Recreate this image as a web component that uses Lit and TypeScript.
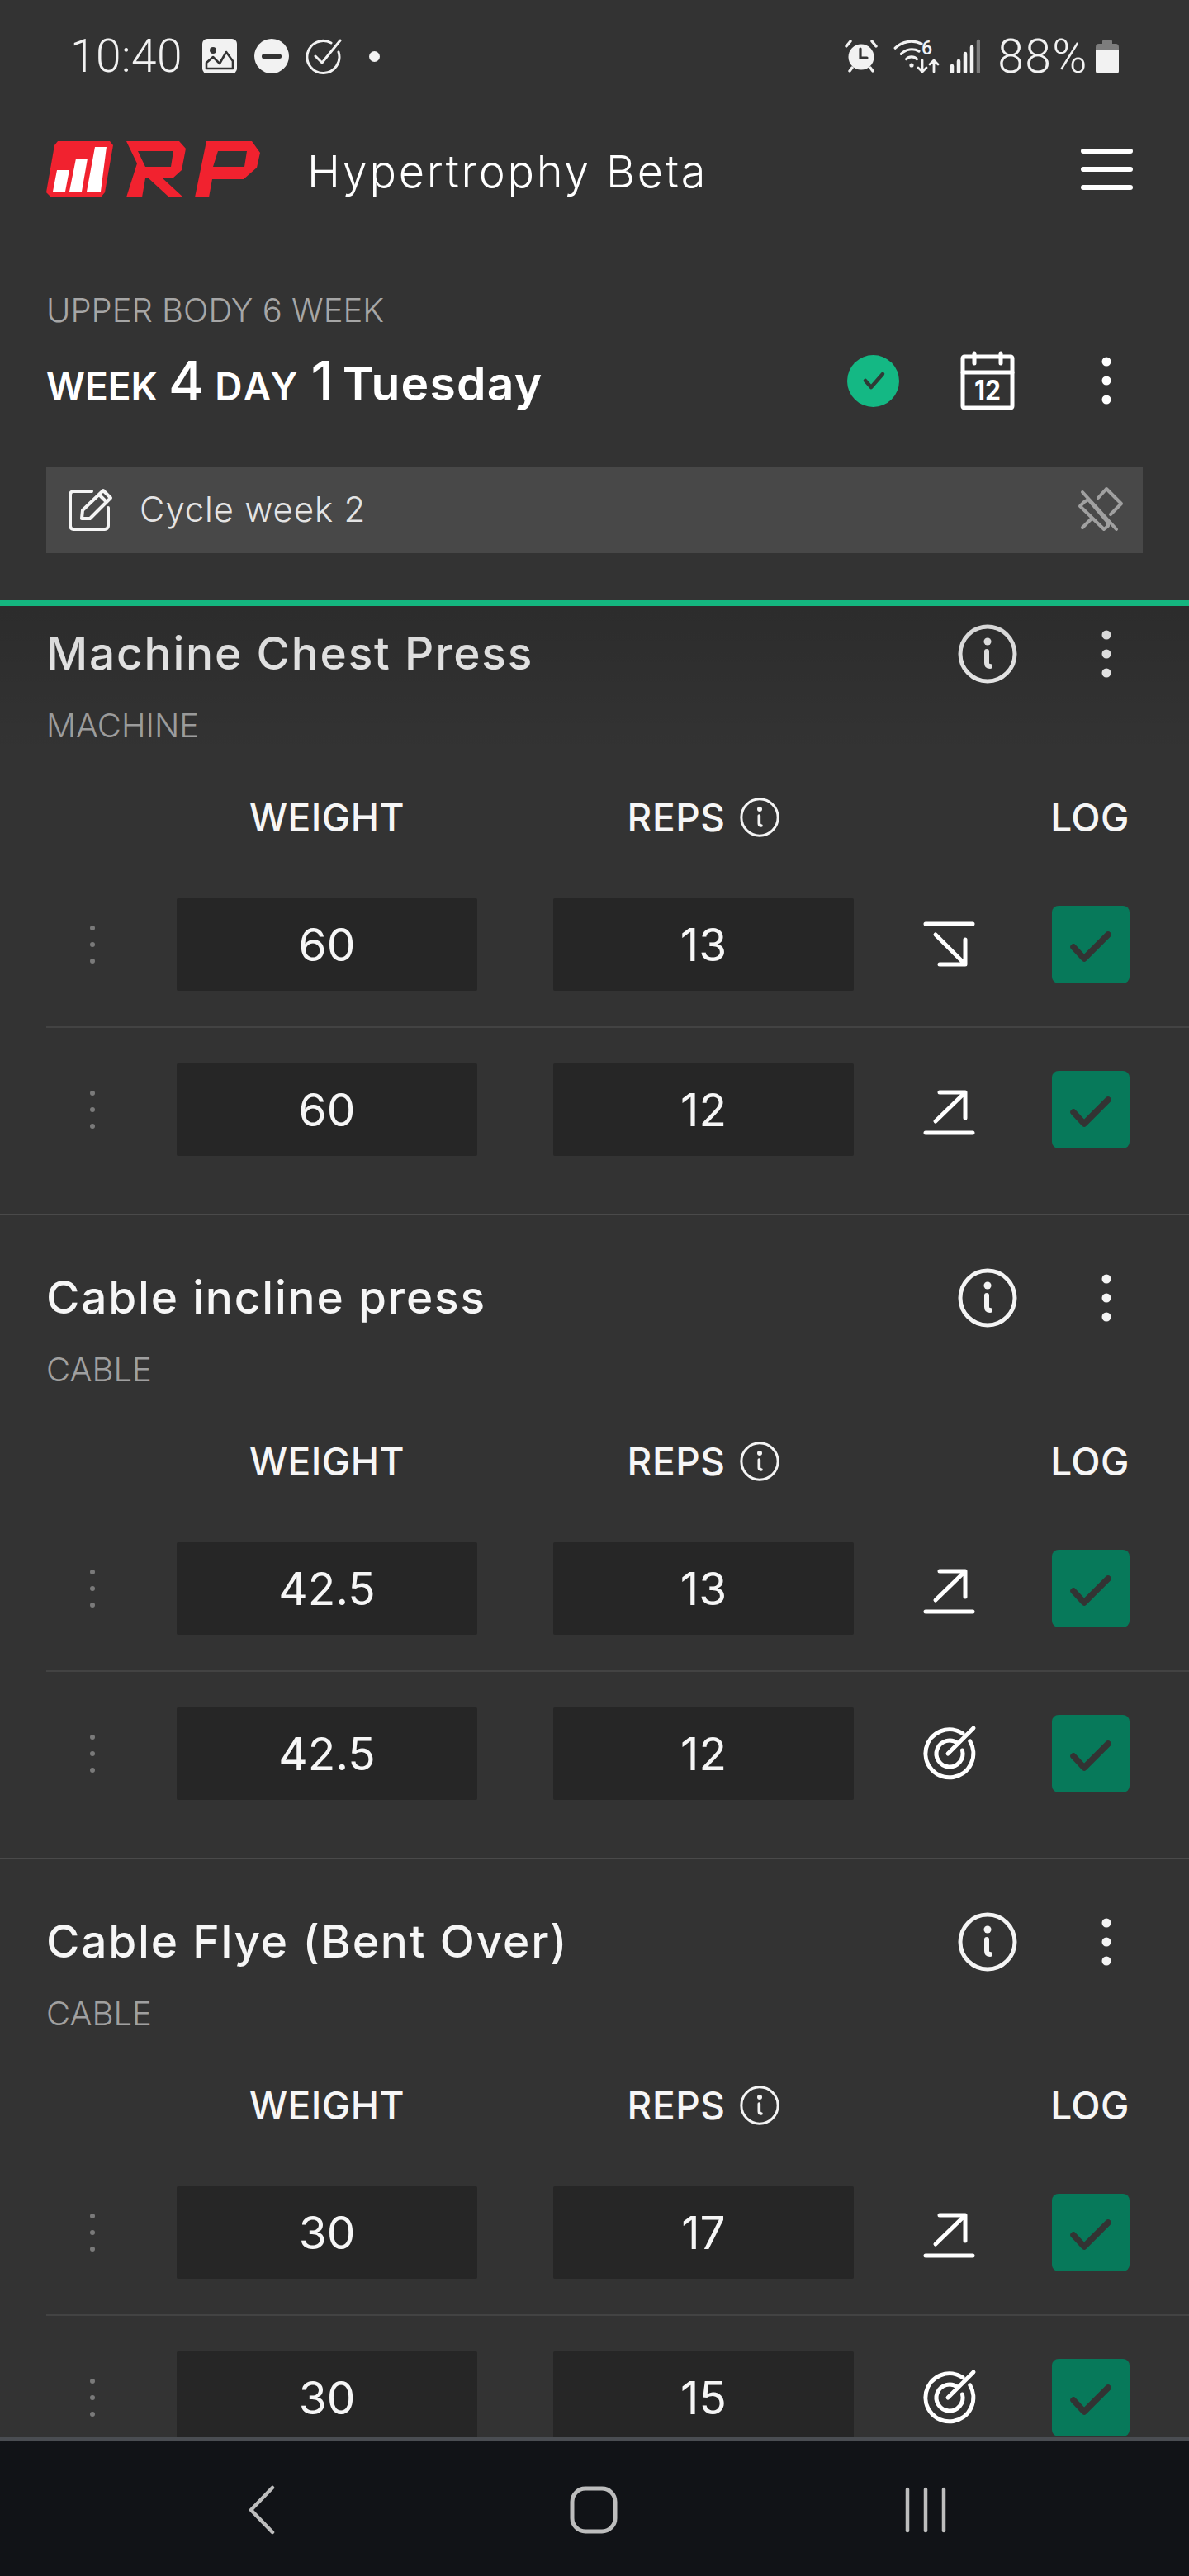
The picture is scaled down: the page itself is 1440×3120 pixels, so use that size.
import { LitElement, html, css } from 'lit';
import { customElement, property } from 'lit/decorators.js';

type Trend = 'down' | 'up' | 'target';
interface SetRow { weight: string; reps: string; trend: Trend; }
interface Exercise { name: string; kind: string; sets: SetRow[]; }

const EXERCISES: Exercise[] = [
  {
    name: 'Machine Chest Press',
    kind: 'MACHINE',
    sets: [
      { weight: '60', reps: '13', trend: 'down' },
      { weight: '60', reps: '12', trend: 'up' },
    ],
  },
  {
    name: 'Cable incline press',
    kind: 'CABLE',
    sets: [
      { weight: '42.5', reps: '13', trend: 'up' },
      { weight: '42.5', reps: '12', trend: 'target' },
    ],
  },
  {
    name: 'Cable Flye (Bent Over)',
    kind: 'CABLE',
    sets: [
      { weight: '30', reps: '17', trend: 'up' },
      { weight: '30', reps: '15', trend: 'target' },
    ],
  },
];

const dots = (color = '#fff') => html`
  <svg width="24" height="70" viewBox="0 0 24 70" fill=${color}>
    <ellipse cx="12" cy="12" rx="5.5" ry="5.5" />
    <ellipse cx="12" cy="35" rx="5.5" ry="5.5" />
    <ellipse cx="12" cy="58" rx="5.5" ry="5.5" />
  </svg>
`;

const infoIcon = (size: number, stroke: number) => html`
  <svg width=${size} height=${size} viewBox="0 0 72 72" fill="none" stroke="#f4f4f4" stroke-width=${stroke} stroke-linecap="round">
    <circle cx="36" cy="36" r=${36 - stroke / 2 - 0.5} />
    <path d="M35 33 V47 Q35 51 39 51" stroke-width=${stroke + 1} />
    <circle cx="36" cy="21" r="4.5" fill="#f4f4f4" stroke="none" />
  </svg>
`;

const trendIcon = (trend: Trend) => {
  if (trend === 'down') {
    return html`<svg width="72" height="72" viewBox="0 0 72 72" fill="none" stroke="#fff" stroke-width="5" stroke-linecap="round" stroke-linejoin="round">
      <path d="M7 11 H64 M19 24 L54 59 M24 60 H55 V30" />
    </svg>`;
  }
  if (trend === 'up') {
    return html`<svg width="72" height="72" viewBox="0 0 72 72" fill="none" stroke="#fff" stroke-width="5" stroke-linecap="round" stroke-linejoin="round">
      <path d="M7 64 H64 M19 50 L54 16 M24 15 H55 V46" />
    </svg>`;
  }
  return html`<svg width="72" height="72" viewBox="0 0 72 72" fill="none" stroke="#fff" stroke-width="5" stroke-linecap="round">
    <path d="M52 11.7 A29 29 0 1 0 60.8 21" />
    <path d="M46 23.5 A16 16 0 1 0 51.5 32" />
    <path d="M34 36 L65 5" />
  </svg>`;
};

@customElement('exercise-card')
export class ExerciseCard extends LitElement {
  static styles = css`
    :host {
      display: block;
      font-family: Inter, 'Noto Sans', sans-serif;
      border-bottom: 2px solid #4a4a4a;
      padding-bottom: 70px;
    }
    svg { display: block; flex: none; }
    .title-row {
      display: flex;
      align-items: center;
      height: 70px;
      padding: 65px 88px 0 56px;
    }
    .title {
      flex: 1;
      margin-top: -2px;
      font-size: 55px;
      font-weight: 500;
      letter-spacing: 1.8px;
      color: #f6f6f6;
      line-height: 70px;
    }
    .info-btn { margin-right: 96px; }
    .kind {
      margin: 27px 0 0 56px;
      font-size: 40px;
      font-weight: 300;
      line-height: 50px;
      color: #a0a0a0;
    }
    .grid {
      display: grid;
      grid-template-columns: 158px 364px 92px 364px 240px 94px;
      align-items: center;
    }
    .heads {
      margin: 58px 0 27px;
      padding: 0 72px 0 56px;
      height: 56px;
      font-size: 46px;
      font-weight: 500;
      letter-spacing: 0.5px;
      color: #f6f6f6;
      text-align: center;
    }
    .c-w { grid-column: 2; }
    .c-r { grid-column: 4; }
    .c-i { grid-column: 5; }
    .c-c { grid-column: 6; }
    .reps-head {
      display: flex;
      justify-content: center;
      align-items: center;
      gap: 18px;
    }
    .log-head { white-space: nowrap; justify-self: end; }
    .set {
      margin-left: 56px;
      padding: 43px 72px 43px 0;
      border-bottom: 2px solid #434343;
    }
    .set:last-of-type { border-bottom: none; padding-bottom: 0; }
    .grip { grid-column: 1; margin-left: 44px; }
    .field {
      height: 112px;
      display: flex;
      align-items: center;
      justify-content: center;
      background: #262626;
      border-radius: 2px;
      font-size: 55px;
      font-weight: 400;
      color: #f6f6f6;
    }
    .trend { margin-left: 80px; }
    .check {
      width: 94px;
      height: 94px;
      border-radius: 8px;
      background: #07795a;
    }
  `;

  @property({ attribute: false }) exercise!: Exercise;

  render() {
    const ex = this.exercise;
    return html`
      <div class="title-row">
        <div class="title">${ex.name}</div>
        <div class="info-btn">${infoIcon(72, 5)}</div>
        ${dots('#f4f4f4')}
      </div>
      <div class="kind">${ex.kind}</div>
      <div class="grid heads">
        <div class="c-w">WEIGHT</div>
        <div class="c-r reps-head"><span>REPS</span>${infoIcon(48, 4.5)}</div>
        <div class="c-c log-head">LOG</div>
      </div>
      ${ex.sets.map(
        (s) => html`
          <div class="grid set">
            <div class="grip">
              <svg width="24" height="52" viewBox="0 0 24 52" fill="#7a7a7a">
                <circle cx="12" cy="6" r="3" />
                <circle cx="12" cy="26" r="3" />
                <circle cx="12" cy="46" r="3" />
              </svg>
            </div>
            <div class="field c-w">${s.weight}</div>
            <div class="field c-r">${s.reps}</div>
            <div class="c-i trend">${trendIcon(s.trend)}</div>
            <div class="c-c check">
              <svg width="94" height="94" viewBox="0 0 94 94" fill="none" stroke="#333" stroke-width="7.5" stroke-linecap="round" stroke-linejoin="round">
                <path d="M26 50 L39 64 L68 35" />
              </svg>
            </div>
          </div>
        `
      )}
    `;
  }
}

@customElement('app-root')
export class AppRoot extends LitElement {
  static styles = css`
    :host {
      display: block;
      width: 1440px;
      height: 3120px;
      background: #333;
      font-family: Inter, 'Noto Sans', sans-serif;
      color: #fff;
      overflow: hidden;
    }
    .page {
      display: flex;
      flex-direction: column;
      height: 3120px;
    }
    svg { display: block; flex: none; }

    /* status bar */
    .status {
      height: 136px;
      flex: none;
      display: flex;
      align-items: center;
      padding: 0 85px 0 85px;
      font-family: Roboto, sans-serif;
      font-weight: 300;
      font-size: 55px;
      color: #f2f2f2;
    }
    .time { letter-spacing: 0.5px; margin-right: 24px; }
    .gap-21 { margin-right: 21px; }
    .gap-19 { margin-right: 19px; }
    .gap-33 { margin-right: 33px; }
    .status-dot { width: 13px; height: 13px; border-radius: 50%; background: #f2f2f2; }
    .status-right {
      margin-left: auto;
      display: flex;
      align-items: center;
    }
    .pct { margin: 0 9px 0 21px; font-size: 57px; letter-spacing: 1.5px; font-weight: 300; }
    .alarm { margin-right: 19px; }
    .wifi { margin-right: 10px; }

    /* app header */
    .app-header {
      height: 138px;
      flex: none;
      display: flex;
      align-items: center;
      padding: 0 68px 0 56px;
    }
    .app-name {
      flex: 1;
      margin-left: 56px;
      margin-top: 4px;
      font-size: 54px;
      font-weight: 300;
      letter-spacing: 2.7px;
    }
    .burger {
      display: flex;
      flex-direction: column;
      gap: 16px;
    }
    .burger span {
      width: 63px;
      height: 6px;
      border-radius: 3px;
      background: #fff;
    }

    /* workout summary */
    .summary { flex: none; padding: 77px 0 57px; }
    .meso {
      margin-left: 56px;
      font-size: 40px;
      font-weight: 300;
      line-height: 50px;
      color: #a6a6a6;
    }
    .week-row {
      display: flex;
      align-items: center;
      height: 70px;
      margin-top: 25px;
      padding: 0 88px 0 56px;
    }
    .week {
      flex: 1;
      display: flex;
      align-items: baseline;
      gap: 13px;
      font-weight: 600;
      color: #fff;
    }
    .w-label { font-size: 46px; }
    .w-spaced { letter-spacing: 3px; }
    .w-num { font-size: 66px; font-weight: 500; }
    .w-one { margin-right: -2px; }
    .w-day { font-size: 57px; letter-spacing: 1.2px; }
    .done {
      width: 63px;
      height: 63px;
      border-radius: 50%;
      background: #14b884;
      margin-right: 74px;
      display: flex;
      align-items: center;
      justify-content: center;
    }
    .cal { margin-right: 99px; }
    .note {
      margin: 70px 56px 0;
      height: 104px;
      display: flex;
      align-items: center;
      padding: 0 20px 0 26px;
      background: #484848;
      font-size: 42px;
      font-weight: 300;
      letter-spacing: 0.8px;
      color: #e4e4e4;
    }
    .note-text { flex: 1; margin: -3px 0 0 31px; }

    .accent { flex: none; height: 7px; background: #15b67f; }

    /* scrolled list */
    .list {
      flex: 1;
      min-height: 0;
      overflow: hidden;
      position: relative;
    }
    .list-inner { margin-top: -42px; }
    .fade {
      position: absolute;
      left: 0;
      right: 0;
      top: 0;
      height: 180px;
      background: linear-gradient(rgba(0, 0, 0, 0.14), rgba(0, 0, 0, 0));
      pointer-events: none;
    }

    /* android nav */
    .nav {
      flex: none;
      box-sizing: border-box;
      border-top: 4px solid #4a4d52;
      background: #111317;
      display: flex;
      align-items: center;
      padding: 4px 0 0 116px;
      height: 168px;
    }
    .nav-item {
      width: 402px;
      display: flex;
      justify-content: center;
    }
  `;

  render() {
    return html`
      <div class="page">
        <div class="status">
          <span class="time">10:40</span>
          <svg class="gap-21" width="42" height="42" viewBox="0 0 42 42">
            <rect width="42" height="42" rx="6" fill="#f2f2f2" />
            <circle cx="13" cy="14" r="4" fill="#333" />
            <path d="M5 36 V29 L13 22 L21 30 L29 16 L37 27 V36 Z" fill="none" stroke="#333" stroke-width="2.6" stroke-linejoin="round" />
          </svg>
          <svg class="gap-19" width="42" height="42" viewBox="0 0 42 42">
            <circle cx="21" cy="21" r="21" fill="#f2f2f2" />
            <rect x="9" y="18.5" width="24" height="5.5" rx="2.5" fill="#333" />
          </svg>
          <svg class="gap-33" width="45" height="45" viewBox="0 0 45 45" fill="none" stroke="#f2f2f2" stroke-width="3" stroke-linecap="round" stroke-linejoin="round">
            <path d="M32 6 A19.5 19.5 0 1 0 41 17" />
            <path d="M13 22 L21 30 L43 3" />
          </svg>
          <span class="status-dot"></span>
          <div class="status-right">
            <svg class="alarm" width="40" height="40" viewBox="0 0 40 40" fill="#f2f2f2" stroke="#f2f2f2" stroke-linecap="round">
              <circle cx="20" cy="21" r="15.5" stroke="none" />
              <path d="M2 8 L7 2 M38 8 L33 2 M6 38 L9 34 M34 38 L31 34" stroke-width="3.4" fill="none" />
              <path d="M19 11 V22 H27" stroke="#333" stroke-width="3.2" fill="none" />
            </svg>
            <svg class="wifi" width="58" height="44" viewBox="0 0 58 44" fill="none" stroke="#f2f2f2" stroke-width="3.2" stroke-linecap="round" stroke-linejoin="round">
              <path d="M2.2 12.2 A28 28 0 0 1 34 7" />
              <path d="M9.3 19.3 A18 18 0 0 1 31 16" />
              <path d="M15.6 25.6 A9 9 0 0 1 28.4 25.6" />
              <circle cx="22" cy="33" r="2.6" fill="#f2f2f2" stroke="none" />
              <text x="34" y="20" font-size="23" font-weight="500" font-family="Roboto, sans-serif" fill="#f2f2f2" stroke="none">6</text>
              <path d="M35 27 V41 M30 36 L35 41 L40 36 M49 41 V27 M44 32 L49 27 L54 32" stroke-width="2.8" />
            </svg>
            <svg width="37" height="42" viewBox="0 0 37 42" stroke-width="4.5" stroke-linecap="round">
              <path d="M3 40 V33 M11 40 V27 M19 40 V18 M27 40 V10" stroke="#f2f2f2" />
              <path d="M35 40 V3" stroke="#7b7b7b" />
            </svg>
            <span class="pct">88%</span>
            <svg width="28" height="42" viewBox="0 0 28 42">
              <path d="M8 6 V3 a2 2 0 0 1 2 -2 H18 a2 2 0 0 1 2 2 V6 H24 a4 4 0 0 1 4 4 V13 H0 V10 a4 4 0 0 1 4 -4 Z" fill="#7d7d7d" />
              <path d="M0 13 H28 V39 a3 3 0 0 1 -3 3 H3 a3 3 0 0 1 -3 -3 Z" fill="#f2f2f2" />
            </svg>
          </div>
        </div>

        <div class="app-header">
          <svg width="260" height="70" viewBox="56 168 260 70">
            <path d="M70 169 H133 L137 174 L127 231 L122 237 H62 L56 231 L66 174 Z" fill="#f1222f" />
            <path d="M69 204 H84 L79 230 H64 Z M92 190 H106 L99 230 H84 Z M115 176 H129 L122 230 H105 Z" fill="#fff" />
            <path fill-rule="evenodd" fill="#f1222f" d="M153 169 H217 L225 178 L220 204 L209 214 H197 L222 237 H205 L180 214 H176 L172 237 H153 L166 196 Z M167 181 L176 200 H207 L210 181 Z" />
            <path fill-rule="evenodd" fill="#f1222f" d="M250 169 H305 L315 183 L311 201 L295 215 H257 L253 237 H236 Z M264 181 L258 200 H296 L299 181 Z" />
          </svg>
          <div class="app-name">Hypertrophy Beta</div>
          <div class="burger"><span></span><span></span><span></span></div>
        </div>

        <div class="summary">
          <div class="meso">UPPER BODY 6 WEEK</div>
          <div class="week-row">
            <div class="week">
              <span class="w-label">WEEK</span>
              <span class="w-num">4</span>
              <span class="w-label w-spaced">DAY</span>
              <span class="w-num w-one">1</span>
              <span class="w-day">Tuesday</span>
            </div>
            <div class="done">
              <svg width="36" height="36" viewBox="0 0 36 36" fill="none" stroke="#2f3a36" stroke-width="4.5" stroke-linecap="round" stroke-linejoin="round">
                <path d="M8 18 L15 26 L29 10" />
              </svg>
            </div>
            <svg class="cal" width="66" height="72" viewBox="0 0 66 72" fill="none" stroke="#fff" stroke-width="5" stroke-linecap="round" stroke-linejoin="round">
              <rect x="3" y="7" width="60" height="62" rx="2" />
              <path d="M3 26 H63" />
              <path d="M17 3 V15 M49 3 V15" />
              <text x="33" y="60" text-anchor="middle" font-size="34" font-weight="700" font-family="Inter, sans-serif" fill="#fff" stroke="none" textLength="32" lengthAdjust="spacingAndGlyphs">12</text>
            </svg>
            ${dots('#fff')}
          </div>
          <div class="note">
            <svg width="56" height="56" viewBox="0 0 56 56" fill="none" stroke="#f4f4f4" stroke-width="4" stroke-linecap="round" stroke-linejoin="round">
              <path d="M29 5 H7 a4 4 0 0 0 -4 4 V47 a4 4 0 0 0 4 4 H45 a4 4 0 0 0 4 -4 V25" />
              <path d="M18 28 L43 4 L52 13 L27 38 H17 Z M38 9 L47 18" />
            </svg>
            <span class="note-text">Cycle week 2</span>
            <svg width="60" height="60" viewBox="0 0 60 60" fill="none" stroke="#a0a0a0" stroke-width="4" stroke-linecap="round" stroke-linejoin="round">
              <path d="M7 8 L48 53" />
              <path d="M9 20 L4 25 L33 53 L38 49 V45 L14 17 Z" />
              <path d="M41 35 L54 22 L36 4 L26 15" />
              <path d="M18 40 L7 51" />
            </svg>
          </div>
        </div>

        <div class="accent"></div>

        <div class="list">
          <div class="list-inner">
            ${EXERCISES.map((ex) => html`<exercise-card .exercise=${ex}></exercise-card>`)}
          </div>
          <div class="fade"></div>
        </div>

        <div class="nav">
          <div class="nav-item">
            <svg width="36" height="60" viewBox="0 0 36 60" fill="none" stroke="#bdbdbd" stroke-width="4.5" stroke-linecap="round" stroke-linejoin="round">
              <path d="M31 3 L5 30 L31 57" />
            </svg>
          </div>
          <div class="nav-item">
            <svg width="58" height="58" viewBox="0 0 58 58" fill="none" stroke="#bdbdbd" stroke-width="5">
              <rect x="3" y="3" width="52" height="52" rx="16" />
            </svg>
          </div>
          <div class="nav-item">
            <svg width="52" height="56" viewBox="0 0 52 56" fill="none" stroke="#bdbdbd" stroke-width="4.5" stroke-linecap="round">
              <path d="M4 3 V53 M26 3 V53 M48 3 V53" />
            </svg>
          </div>
        </div>
      </div>
    `;
  }
}
